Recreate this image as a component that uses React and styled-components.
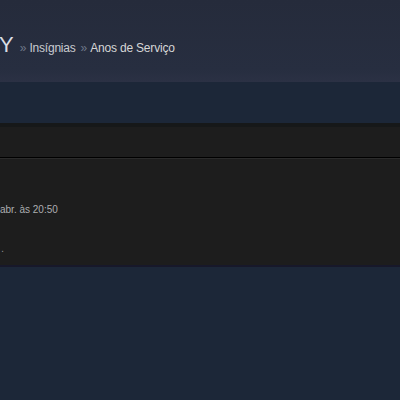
import styled, { createGlobalStyle } from "styled-components"

const GlobalStyle = createGlobalStyle`
  html, body {
    margin: 0;
    padding: 0;
    background: #1c2738;
    font-family: Arial, "Liberation Sans", Helvetica, sans-serif;
    overflow: hidden;
  }
`

const Page = styled.div`
  width: 400px;
  height: 400px;
  display: flex;
  flex-direction: column;
  background: #1c2738;
`

/////////////////////
//    HEADER

const Header = styled.div`
  height: 82px;
  box-sizing: border-box;
  padding-top: 32px;
  background: linear-gradient(to bottom, #252b3b 0%, #272e40 85%, #2b3144 100%);
`

const Crumbs = styled.div`
  display: flex;
  align-items: baseline;
  margin-left: -1px;
  white-space: nowrap;
`

const PersonaName = styled.span`
  font-size: 22px;
  color: #d9dde3;
  margin-right: 6px;
`

const Sep = styled.span`
  font-size: 12px;
  color: #6d7688;
  margin-right: 3px;
`

const Crumb = styled.a`
  font-size: 12px;
  color: ${p => (p.$current ? "#d6d6d6" : "#c9cbd0")};
  margin-right: 5px;
  letter-spacing: -0.2px;
  text-decoration: none;
`

/////////////////////
//    SUB BAR

const SubBar = styled.div`
  height: 41px;
  background: #1c2738;
`

/////////////////////
//    PANEL

const Panel = styled.div`
  border-top: 4px solid #161819;
  border-bottom: 2px solid #17182a;
  background: #1d1d1d;
`

const PanelHead = styled.div`
  height: 30px;
  border-bottom: 1px solid #000;
  box-shadow: 0 1px 0 #2b2b2b;
`

const PanelBody = styled.div`
  height: 107px;
  box-sizing: border-box;
  padding-top: 46px;
  display: flex;
  flex-direction: column;
`

const Unlocked = styled.div`
  font-size: 10px;
  color: #acaeb1;
  white-space: nowrap;
`

const Note = styled.div`
  font-size: 11px;
  color: #8a8a8a;
  margin-top: 27px;
  margin-left: 1px;
`

const Rest = styled.div`
  flex: 1;
  background: #1c2738;
`

const App = () => {
  return (
    <Page>
      <GlobalStyle />
      <Header>
        <Crumbs>
          <PersonaName>Y</PersonaName>
          <Sep>»</Sep>
          <Crumb href="#">Insígnias</Crumb>
          <Sep>»</Sep>
          <Crumb $current>Anos de Serviço</Crumb>
        </Crumbs>
      </Header>
      <SubBar />
      <Panel>
        <PanelHead />
        <PanelBody>
          <Unlocked>abr. às 20:50</Unlocked>
          <Note>.</Note>
        </PanelBody>
      </Panel>
      <Rest />
    </Page>
  )
}

export default App
